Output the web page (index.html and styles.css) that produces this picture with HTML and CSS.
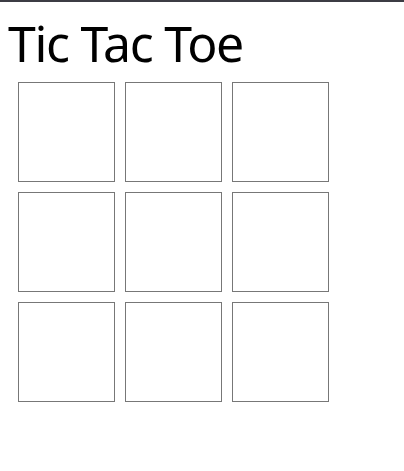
FILE: index.html
```html
<!DOCTYPE html>
<html>
<head>
<meta charset="utf-8">
<link rel="stylesheet" href="styles.css">
</head>
<body>
<div class="topbar"></div>
<div class="page">
  <h1 class="title">Tic Tac Toe</h1>
  <div class="board">
    <button class="cell"></button>
    <button class="cell"></button>
    <button class="cell"></button>
    <button class="cell"></button>
    <button class="cell"></button>
    <button class="cell"></button>
    <button class="cell"></button>
    <button class="cell"></button>
    <button class="cell"></button>
  </div>
</div>
</body>
</html>
```
FILE: styles.css
```css
html, body {
  margin: 0;
  padding: 0;
  background: #ffffff;
}
.topbar {
  height: 2px;
  background: #3c3c44;
}
.page {
  padding: 0 8px;
}
.title {
  font-family: "Noto Sans", sans-serif;
  font-weight: 400;
  font-size: 50px;
  letter-spacing: -1.3px;
  line-height: 60px;
  margin: 11px 0 0 0;
  color: #000;
}
.board {
  display: grid;
  grid-template-columns: repeat(3, 97px);
  grid-auto-rows: 100px;
  gap: 10px;
  margin: 9px 0 0 10px;
}
.cell {
  box-sizing: border-box;
  width: 97px;
  height: 100px;
  margin: 0;
  padding: 0;
  background: #ffffff;
  border: 1px solid #777777;
  border-radius: 0;
}
```
